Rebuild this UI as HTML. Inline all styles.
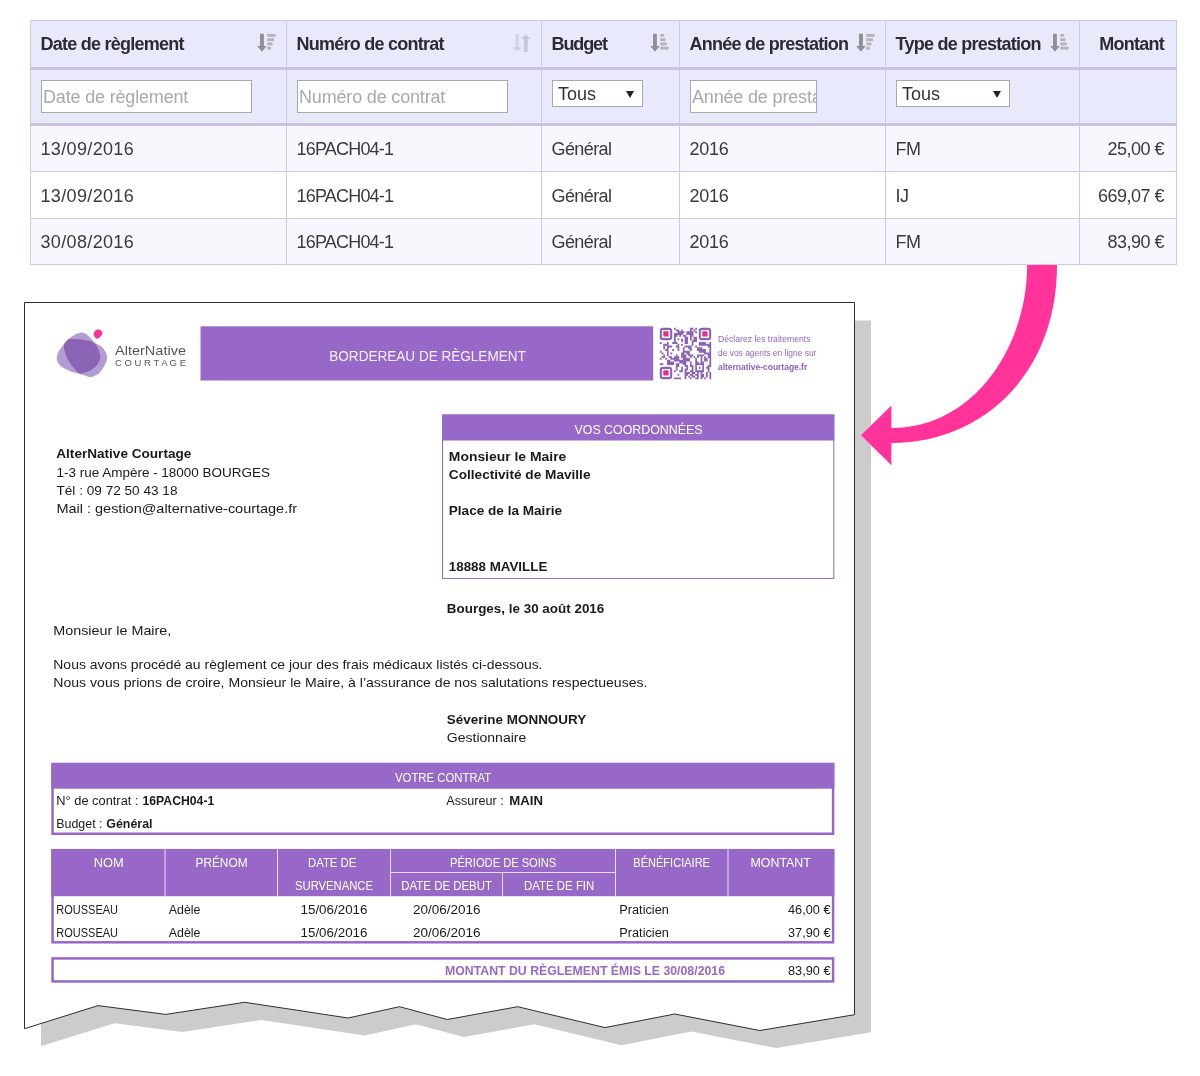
<!DOCTYPE html>
<html lang="fr"><head><meta charset="utf-8"><title>Bordereau de règlement</title>
<style>
*{box-sizing:border-box}
html,body{margin:0;padding:0;background:#fff}
body{width:1200px;height:1076px;position:relative;overflow:hidden;font-family:"Liberation Sans",sans-serif;color:#333}
table.grid{will-change:transform;position:absolute;left:30px;top:20px;width:1146px;border-collapse:collapse;table-layout:fixed;font-size:18px}
table.grid th,table.grid td{border:1px solid #cdcae6;padding:0 0 0 9.5px;text-align:left;vertical-align:middle;white-space:nowrap;overflow:hidden}
table.grid thead th{background:#e8eafc;height:48px;border-bottom:3px solid #c8c3e1;font-weight:700;font-size:18px;letter-spacing:-0.75px;color:#2b2b33;position:relative;padding-top:1px}
table.grid tr.filters td{background:#e8eafc;height:56px;border-bottom:3px solid #c8c3e1;vertical-align:top;padding-top:10px;padding-left:10px}
table.grid tbody td{height:47px;color:#3a3a3a;padding-top:2px}
table.grid tbody tr.last td{height:46px}
table.grid tbody tr.odd td{background:#f8f7fd}
table.grid tbody tr.even td{background:#fff}
table.grid .num{text-align:right;padding:2px 12px 0 0}
table.grid th.num{padding:1px 12px 0 0}
.sort{position:absolute;top:12px;width:20px;height:20px}
input.f{display:block;height:33px;border:1px solid #a9a9a9;background:#fff;font:18px "Liberation Sans",sans-serif;letter-spacing:-0.17px;padding:2px 0 0 1px;margin:0;color:#333;outline:none;border-radius:0}
input.f::placeholder{color:#a9a9a9;opacity:1}
.sel{display:block;position:relative;height:27px;border:1px solid #a9a9a9;background:#fff;font-size:18px;line-height:26px;padding-left:5px;color:#333}
.sel i{position:absolute;right:8px;top:10px;width:0;height:0;border-left:4px solid transparent;border-right:4px solid transparent;border-top:7px solid #222}
svg.doc{position:absolute;left:0;top:0;will-change:transform}
</style></head>
<body>
<svg class="doc" width="1200" height="1076" viewBox="0 0 1200 1076" font-family="Liberation Sans, sans-serif"><polygon points="41.0,320.5 41.0,1046.3 114.5,1023.2 182.3,1032.0 261.2,1019.9 364.6,1035.6 415.9,1024.3 463.8,1037.1 534.2,1024.3 621.5,1045.2 691.2,1031.6 776.3,1048.1 871.0,1032.3 871.0,320.5" fill="#cccccc"/>
<polygon points="24.5,302.5 24.5,1028.7 98.0,1005.6 165.8,1014.4 244.7,1002.3 348.1,1018.0 399.4,1006.7 447.3,1019.5 517.7,1006.7 605.0,1027.6 674.7,1014.0 759.8,1030.5 854.5,1014.7 854.5,302.5" fill="#ffffff" stroke="#2e2e2e" stroke-width="1"/>
<path d="M1027.2 265 L1057 265 C1057 375 981.400 443 891.400 443 L891.400 465.200 L861 435.200 L891.400 405.400 L891.400 428.100 C975.400 428.100 1027.200 345 1027.200 265 Z" fill="#ff3399"/>
<clipPath id="lgA"><path d="M78.4 333.2C79.6 332.8 80.8 332.3 82.1 332.4C83.3 332.5 84.4 333.0 85.7 333.8C86.9 334.5 88.1 335.7 89.6 337.1C91.1 338.5 92.5 340.7 94.6 342.4C96.7 344.1 100.4 345.3 102.4 347.4C104.4 349.5 106.3 352.6 106.9 355.2C107.4 357.8 106.9 360.2 105.7 363.0C104.6 365.8 102.0 369.8 100.2 371.9C98.3 374.1 96.3 375.0 94.6 375.8C92.9 376.7 91.6 377.0 90.1 377.0C88.6 377.0 87.7 376.6 85.7 375.8C83.6 375.1 80.8 375.1 77.9 372.5C75.0 369.9 70.7 364.4 68.4 360.2C66.1 356.1 64.2 350.7 63.9 347.4C63.7 344.2 64.9 342.9 66.7 340.7C68.6 338.6 73.1 335.8 75.1 334.6C77.0 333.3 77.3 333.6 78.4 333.2Z"/></clipPath>
<path d="M78.4 333.2C79.6 332.8 80.8 332.3 82.1 332.4C83.3 332.5 84.4 333.0 85.7 333.8C86.9 334.5 88.1 335.7 89.6 337.1C91.1 338.5 92.5 340.7 94.6 342.4C96.7 344.1 100.4 345.3 102.4 347.4C104.4 349.5 106.3 352.6 106.9 355.2C107.4 357.8 106.9 360.2 105.7 363.0C104.6 365.8 102.0 369.8 100.2 371.9C98.3 374.1 96.3 375.0 94.6 375.8C92.9 376.7 91.6 377.0 90.1 377.0C88.6 377.0 87.7 376.6 85.7 375.8C83.6 375.1 80.8 375.1 77.9 372.5C75.0 369.9 70.7 364.4 68.4 360.2C66.1 356.1 64.2 350.7 63.9 347.4C63.7 344.2 64.9 342.9 66.7 340.7C68.6 338.6 73.1 335.8 75.1 334.6C77.0 333.3 77.3 333.6 78.4 333.2Z" fill="#b39bd3"/><path d="M61.1 348.0C62.7 345.7 64.9 342.2 66.7 340.7C68.6 339.2 69.1 339.1 72.3 339.1C75.5 339.0 82.0 339.4 85.7 340.2C89.4 340.9 92.3 341.4 94.6 343.5C96.9 345.6 98.8 350.2 99.6 353.0C100.4 355.8 100.6 357.6 99.6 360.2C98.6 362.8 96.2 366.5 93.5 368.6C90.8 370.7 86.7 372.4 83.4 373.1C80.2 373.7 77.2 373.3 74.0 372.5C70.7 371.7 66.4 369.3 63.9 368.0C61.5 366.7 60.7 366.1 59.5 364.7C58.3 363.3 57.1 361.4 56.8 359.7C56.5 357.9 56.8 356.1 57.5 354.1C58.2 352.1 59.6 350.2 61.1 348.0Z" fill="#b39bd3"/><path d="M61.1 348.0C62.7 345.7 64.9 342.2 66.7 340.7C68.6 339.2 69.1 339.1 72.3 339.1C75.5 339.0 82.0 339.4 85.7 340.2C89.4 340.9 92.3 341.4 94.6 343.5C96.9 345.6 98.8 350.2 99.6 353.0C100.4 355.8 100.6 357.6 99.6 360.2C98.6 362.8 96.2 366.5 93.5 368.6C90.8 370.7 86.7 372.4 83.4 373.1C80.2 373.7 77.2 373.3 74.0 372.5C70.7 371.7 66.4 369.3 63.9 368.0C61.5 366.7 60.7 366.1 59.5 364.7C58.3 363.3 57.1 361.4 56.8 359.7C56.5 357.9 56.8 356.1 57.5 354.1C58.2 352.1 59.6 350.2 61.1 348.0Z" fill="#8c64b5" clip-path="url(#lgA)"/>
<path d="M94.0 332.4C94.6 331.3 96.2 329.9 97.4 329.6C98.6 329.3 100.5 329.9 101.3 330.7C102.1 331.5 102.8 333.2 102.1 334.6C101.5 335.9 98.7 338.6 97.4 338.8C96.0 339.0 94.6 336.8 94.0 335.7C93.5 334.6 93.5 333.4 94.0 332.4Z" fill="#fb3399"/>
<text x="115" y="354.5" font-size="13.3" fill="#565656" textLength="71.0" lengthAdjust="spacingAndGlyphs">AlterNative</text>
<text x="115" y="365.6" font-size="8.2" fill="#565656" textLength="71.0" lengthAdjust="spacingAndGlyphs">C O U R T A G E</text>
<rect x="200.5" y="326.3" width="452.7" height="54.2" fill="#9768c8"/>
<text x="329.3" y="360.7" font-size="15" fill="#f7f1fd" textLength="196.5" lengthAdjust="spacingAndGlyphs">BORDEREAU DE RÈGLEMENT</text>
<path d="M674.0 327.8h1.8v1.92h-1.8zM689.9 327.8h3.5v1.92h-3.5zM695.2 327.8h1.8v1.92h-1.8zM675.8 329.6h3.5v1.92h-3.5zM681.1 329.6h1.8v1.92h-1.8zM689.9 329.6h1.8v1.92h-1.8zM693.5 329.6h1.8v1.92h-1.8zM677.5 331.3h7.1v1.92h-7.1zM686.4 331.3h7.1v1.92h-7.1zM695.2 331.3h1.8v1.92h-1.8zM674.0 333.1h8.9v1.92h-8.9zM686.4 333.1h7.1v1.92h-7.1zM674.0 334.9h3.5v1.92h-3.5zM679.3 334.9h1.8v1.92h-1.8zM682.8 334.9h3.5v1.92h-3.5zM689.9 334.9h3.5v1.92h-3.5zM674.0 336.7h1.8v1.92h-1.8zM684.6 336.7h3.5v1.92h-3.5zM689.9 336.7h1.8v1.92h-1.8zM693.5 336.7h3.5v1.92h-3.5zM674.0 338.4h1.8v1.92h-1.8zM677.5 338.4h1.8v1.92h-1.8zM681.1 338.4h1.8v1.92h-1.8zM684.6 338.4h3.5v1.92h-3.5zM689.9 338.4h1.8v1.92h-1.8zM693.5 338.4h3.5v1.92h-3.5zM674.0 340.2h1.8v1.92h-1.8zM681.1 340.2h1.8v1.92h-1.8zM684.6 340.2h3.5v1.92h-3.5zM691.7 340.2h5.3v1.92h-5.3zM659.8 342.0h1.8v1.92h-1.8zM666.9 342.0h1.8v1.92h-1.8zM672.2 342.0h5.3v1.92h-5.3zM684.6 342.0h3.5v1.92h-3.5zM691.7 342.0h1.8v1.92h-1.8zM698.8 342.0h7.1v1.92h-7.1zM709.4 342.0h1.8v1.92h-1.8zM663.3 343.8h5.3v1.92h-5.3zM677.5 343.8h1.8v1.92h-1.8zM681.1 343.8h1.8v1.92h-1.8zM691.7 343.8h1.8v1.92h-1.8zM698.8 343.8h12.4v1.92h-12.4zM663.3 345.5h1.8v1.92h-1.8zM666.9 345.5h5.3v1.92h-5.3zM675.8 345.5h3.5v1.92h-3.5zM684.6 345.5h7.1v1.92h-7.1zM695.2 345.5h1.8v1.92h-1.8zM707.7 345.5h3.5v1.92h-3.5zM663.3 347.3h1.8v1.92h-1.8zM666.9 347.3h1.8v1.92h-1.8zM677.5 347.3h1.8v1.92h-1.8zM682.8 347.3h1.8v1.92h-1.8zM688.2 347.3h3.5v1.92h-3.5zM697.0 347.3h5.3v1.92h-5.3zM709.4 347.3h1.8v1.92h-1.8zM665.1 349.1h3.5v1.92h-3.5zM672.2 349.1h1.8v1.92h-1.8zM677.5 349.1h1.8v1.92h-1.8zM682.8 349.1h1.8v1.92h-1.8zM689.9 349.1h1.8v1.92h-1.8zM697.0 349.1h8.9v1.92h-8.9zM709.4 349.1h1.8v1.92h-1.8zM659.8 350.8h1.8v1.92h-1.8zM666.9 350.8h1.8v1.92h-1.8zM682.8 350.8h7.1v1.92h-7.1zM698.8 350.8h7.1v1.92h-7.1zM709.4 350.8h1.8v1.92h-1.8zM661.6 352.6h1.8v1.92h-1.8zM666.9 352.6h1.8v1.92h-1.8zM670.4 352.6h1.8v1.92h-1.8zM681.1 352.6h3.5v1.92h-3.5zM686.4 352.6h3.5v1.92h-3.5zM704.1 352.6h7.1v1.92h-7.1zM663.3 354.4h1.8v1.92h-1.8zM666.9 354.4h1.8v1.92h-1.8zM675.8 354.4h1.8v1.92h-1.8zM681.1 354.4h5.3v1.92h-5.3zM688.2 354.4h5.3v1.92h-5.3zM697.0 354.4h7.1v1.92h-7.1zM707.7 354.4h3.5v1.92h-3.5zM661.6 356.2h3.5v1.92h-3.5zM668.7 356.2h3.5v1.92h-3.5zM674.0 356.2h5.3v1.92h-5.3zM681.1 356.2h5.3v1.92h-5.3zM689.9 356.2h1.8v1.92h-1.8zM693.5 356.2h1.8v1.92h-1.8zM697.0 356.2h1.8v1.92h-1.8zM700.6 356.2h1.8v1.92h-1.8zM704.1 356.2h1.8v1.92h-1.8zM707.7 356.2h3.5v1.92h-3.5zM659.8 357.9h1.8v1.92h-1.8zM665.1 357.9h1.8v1.92h-1.8zM670.4 357.9h8.9v1.92h-8.9zM682.8 357.9h7.1v1.92h-7.1zM695.2 357.9h1.8v1.92h-1.8zM700.6 357.9h1.8v1.92h-1.8zM704.1 357.9h3.5v1.92h-3.5zM709.4 357.9h1.8v1.92h-1.8zM666.9 359.7h3.5v1.92h-3.5zM674.0 359.7h16.0v1.92h-16.0zM695.2 359.7h1.8v1.92h-1.8zM700.6 359.7h1.8v1.92h-1.8zM704.1 359.7h3.5v1.92h-3.5zM709.4 359.7h1.8v1.92h-1.8zM666.9 361.5h7.1v1.92h-7.1zM679.3 361.5h7.1v1.92h-7.1zM689.9 361.5h1.8v1.92h-1.8zM695.2 361.5h3.5v1.92h-3.5zM700.6 361.5h3.5v1.92h-3.5zM709.4 361.5h1.8v1.92h-1.8zM659.8 363.2h3.5v1.92h-3.5zM666.9 363.2h7.1v1.92h-7.1zM675.8 363.2h3.5v1.92h-3.5zM682.8 363.2h3.5v1.92h-3.5zM689.9 363.2h1.8v1.92h-1.8zM695.2 363.2h8.9v1.92h-8.9zM709.4 363.2h1.8v1.92h-1.8zM675.8 365.0h3.5v1.92h-3.5zM684.6 365.0h3.5v1.92h-3.5zM689.9 365.0h3.5v1.92h-3.5zM695.2 365.0h1.8v1.92h-1.8zM702.3 365.0h1.8v1.92h-1.8zM707.7 365.0h3.5v1.92h-3.5zM675.8 366.8h1.8v1.92h-1.8zM681.1 366.8h1.8v1.92h-1.8zM686.4 366.8h1.8v1.92h-1.8zM691.7 366.8h1.8v1.92h-1.8zM695.2 366.8h1.8v1.92h-1.8zM698.8 366.8h1.8v1.92h-1.8zM702.3 366.8h1.8v1.92h-1.8zM705.9 366.8h3.5v1.92h-3.5zM675.8 368.6h1.8v1.92h-1.8zM681.1 368.6h1.8v1.92h-1.8zM684.6 368.6h3.5v1.92h-3.5zM691.7 368.6h1.8v1.92h-1.8zM695.2 368.6h1.8v1.92h-1.8zM702.3 368.6h1.8v1.92h-1.8zM707.7 368.6h1.8v1.92h-1.8zM674.0 370.3h1.8v1.92h-1.8zM679.3 370.3h3.5v1.92h-3.5zM684.6 370.3h1.8v1.92h-1.8zM689.9 370.3h3.5v1.92h-3.5zM695.2 370.3h8.9v1.92h-8.9zM707.7 370.3h1.8v1.92h-1.8zM684.6 372.1h5.3v1.92h-5.3zM691.7 372.1h3.5v1.92h-3.5zM697.0 372.1h1.8v1.92h-1.8zM700.6 372.1h1.8v1.92h-1.8zM705.9 372.1h1.8v1.92h-1.8zM709.4 372.1h1.8v1.92h-1.8zM677.5 373.9h1.8v1.92h-1.8zM684.6 373.9h3.5v1.92h-3.5zM689.9 373.9h3.5v1.92h-3.5zM695.2 373.9h3.5v1.92h-3.5zM700.6 373.9h3.5v1.92h-3.5zM705.9 373.9h1.8v1.92h-1.8zM709.4 373.9h1.8v1.92h-1.8zM684.6 375.7h1.8v1.92h-1.8zM688.2 375.7h1.8v1.92h-1.8zM691.7 375.7h3.5v1.92h-3.5zM697.0 375.7h1.8v1.92h-1.8zM700.6 375.7h3.5v1.92h-3.5zM705.9 375.7h1.8v1.92h-1.8zM709.4 375.7h1.8v1.92h-1.8zM674.0 377.4h7.1v1.92h-7.1zM684.6 377.4h1.8v1.92h-1.8zM689.9 377.4h1.8v1.92h-1.8zM695.2 377.4h3.5v1.92h-3.5zM700.6 377.4h1.8v1.92h-1.8zM704.1 377.4h1.8v1.92h-1.8zM709.4 377.4h1.8v1.92h-1.8z" fill="#8c64b6"/>
<rect x="660.85" y="328.85" width="10.31" height="10.31" rx="2" fill="#fff" stroke="#8c64b6" stroke-width="2.1"/>
<rect x="663.3" y="331.3" width="5.3" height="5.3" rx="0.5" fill="#ee2a8f"/>
<rect x="699.84" y="328.85" width="10.31" height="10.31" rx="2" fill="#fff" stroke="#8c64b6" stroke-width="2.1"/>
<rect x="702.3" y="331.3" width="5.3" height="5.3" rx="0.5" fill="#ee2a8f"/>
<rect x="660.85" y="367.84" width="10.31" height="10.31" rx="2" fill="#fff" stroke="#8c64b6" stroke-width="2.1"/>
<rect x="663.3" y="370.3" width="5.3" height="5.3" rx="0.5" fill="#ee2a8f"/>
<text x="718" y="342.1" font-size="8.6" fill="#9563c4" textLength="92.5" lengthAdjust="spacingAndGlyphs">Déclarez les traitements</text>
<text x="718" y="355.8" font-size="8.6" fill="#9563c4" textLength="98.4" lengthAdjust="spacingAndGlyphs">de vos agents en ligne sur</text>
<text x="718" y="370.1" font-size="8.6" font-weight="700" fill="#8f5fc0" textLength="89.2" lengthAdjust="spacingAndGlyphs">alternative-courtage.fr</text>
<text x="56.3" y="458.3" font-size="13" font-weight="700" fill="#1a1a1a" textLength="135.0" lengthAdjust="spacingAndGlyphs">AlterNative Courtage</text>
<text x="56.5" y="477" font-size="13" fill="#1a1a1a" textLength="213.5" lengthAdjust="spacingAndGlyphs">1-3 rue Ampère - 18000 BOURGES</text>
<text x="56.5" y="495" font-size="13" fill="#1a1a1a" textLength="121.0" lengthAdjust="spacingAndGlyphs">Tél : 09 72 50 43 18</text>
<text x="56.5" y="513.3" font-size="13" fill="#1a1a1a" textLength="240.5" lengthAdjust="spacingAndGlyphs">Mail : gestion@alternative-courtage.fr</text>
<rect x="442.5" y="415" width="391.3" height="163.4" fill="#fff" stroke="#9069bd" stroke-width="1"/>
<rect x="442" y="414.5" width="392.3" height="26" fill="#9768c8"/>
<text x="574.5" y="434.3" font-size="13" fill="#fff" textLength="128.0" lengthAdjust="spacingAndGlyphs">VOS COORDONNÉES</text>
<text x="448.8" y="460.5" font-size="13" font-weight="700" fill="#1a1a1a" textLength="117.5" lengthAdjust="spacingAndGlyphs">Monsieur le Maire</text>
<text x="448.8" y="479.3" font-size="13" font-weight="700" fill="#1a1a1a" textLength="141.7" lengthAdjust="spacingAndGlyphs">Collectivité de Maville</text>
<text x="448.8" y="515" font-size="13" font-weight="700" fill="#1a1a1a" textLength="113.2" lengthAdjust="spacingAndGlyphs">Place de la Mairie</text>
<text x="448.8" y="570.5" font-size="13" font-weight="700" fill="#1a1a1a" textLength="98.5" lengthAdjust="spacingAndGlyphs">18888 MAVILLE</text>
<text x="446.8" y="613" font-size="13" font-weight="700" fill="#1a1a1a" textLength="157.5" lengthAdjust="spacingAndGlyphs">Bourges, le 30 août 2016</text>
<text x="53.3" y="635" font-size="13" fill="#1a1a1a" textLength="118.0" lengthAdjust="spacingAndGlyphs">Monsieur le Maire,</text>
<text x="53.3" y="668.8" font-size="13" fill="#1a1a1a" textLength="489.2" lengthAdjust="spacingAndGlyphs">Nous avons procédé au règlement ce jour des frais médicaux listés ci-dessous.</text>
<text x="53.3" y="687" font-size="13" fill="#1a1a1a" textLength="594.2" lengthAdjust="spacingAndGlyphs">Nous vous prions de croire, Monsieur le Maire, à l’assurance de nos salutations respectueuses.</text>
<text x="446.8" y="723.8" font-size="13" font-weight="700" fill="#1a1a1a" textLength="139.5" lengthAdjust="spacingAndGlyphs">Séverine MONNOURY</text>
<text x="446.8" y="742" font-size="13" fill="#1a1a1a" textLength="79.5" lengthAdjust="spacingAndGlyphs">Gestionnaire</text>
<rect x="52.55" y="764" width="780.55" height="69.75" fill="#fff" stroke="#9768c8" stroke-width="2.5"/>
<rect x="51.3" y="763.2" width="783.05" height="25.5" fill="#9768c8"/>
<text x="395" y="781.8" font-size="12.5" fill="#fff" textLength="96.3" lengthAdjust="spacingAndGlyphs">VOTRE CONTRAT</text>
<text x="56.3" y="804.5" font-size="12" fill="#1a1a1a" textLength="82.2" lengthAdjust="spacingAndGlyphs">N° de contrat :</text>
<text x="142.5" y="804.5" font-size="12" font-weight="700" fill="#1a1a1a" textLength="71.8" lengthAdjust="spacingAndGlyphs">16PACH04-1</text>
<text x="446.3" y="804.5" font-size="12" fill="#1a1a1a" textLength="57.5" lengthAdjust="spacingAndGlyphs">Assureur :</text>
<text x="509.3" y="804.5" font-size="12" font-weight="700" fill="#1a1a1a" textLength="33.7" lengthAdjust="spacingAndGlyphs">MAIN</text>
<text x="56.3" y="827.5" font-size="12" fill="#1a1a1a" textLength="46.2" lengthAdjust="spacingAndGlyphs">Budget :</text>
<text x="106.3" y="827.5" font-size="12" font-weight="700" fill="#1a1a1a" textLength="46.2" lengthAdjust="spacingAndGlyphs">Général</text>
<rect x="52.55" y="850.2" width="780.55" height="92.1" fill="#fff" stroke="#9768c8" stroke-width="2.5"/>
<rect x="51.3" y="849.2" width="783.05" height="47" fill="#9768c8"/>
<line x1="165" y1="849.2" x2="165" y2="896.2" stroke="#e6dcf3" stroke-width="1"/>
<line x1="277.5" y1="849.2" x2="277.5" y2="896.2" stroke="#e6dcf3" stroke-width="1"/>
<line x1="390.5" y1="849.2" x2="390.5" y2="896.2" stroke="#e6dcf3" stroke-width="1"/>
<line x1="615.5" y1="849.2" x2="615.5" y2="896.2" stroke="#e6dcf3" stroke-width="1"/>
<line x1="728" y1="849.2" x2="728" y2="896.2" stroke="#e6dcf3" stroke-width="1"/>
<line x1="502.5" y1="872.5" x2="502.5" y2="896.2" stroke="#e6dcf3" stroke-width="1"/>
<line x1="390.5" y1="872.5" x2="615.5" y2="872.5" stroke="#e6dcf3" stroke-width="1"/>
<text x="93.8" y="866.8" font-size="12" fill="#fff" textLength="30.0" lengthAdjust="spacingAndGlyphs">NOM</text>
<text x="195.5" y="866.8" font-size="12" fill="#fff" textLength="52.0" lengthAdjust="spacingAndGlyphs">PRÉNOM</text>
<text x="308" y="866.8" font-size="12" fill="#fff" textLength="48.3" lengthAdjust="spacingAndGlyphs">DATE DE</text>
<text x="295" y="890" font-size="12" fill="#fff" textLength="78.0" lengthAdjust="spacingAndGlyphs">SURVENANCE</text>
<text x="450" y="866.8" font-size="12" fill="#fff" textLength="106.3" lengthAdjust="spacingAndGlyphs">PÉRIODE DE SOINS</text>
<text x="401.3" y="890" font-size="12" fill="#fff" textLength="90.7" lengthAdjust="spacingAndGlyphs">DATE DE DEBUT</text>
<text x="524" y="890" font-size="12" fill="#fff" textLength="70.3" lengthAdjust="spacingAndGlyphs">DATE DE FIN</text>
<text x="633.3" y="866.8" font-size="12" fill="#fff" textLength="76.7" lengthAdjust="spacingAndGlyphs">BÉNÉFICIAIRE</text>
<text x="750.5" y="866.8" font-size="12" fill="#fff" textLength="60.3" lengthAdjust="spacingAndGlyphs">MONTANT</text>
<text x="56.3" y="913.8" font-size="12" fill="#1a1a1a" textLength="61.7" lengthAdjust="spacingAndGlyphs">ROUSSEAU</text>
<text x="168.8" y="913.8" font-size="12" fill="#1a1a1a" textLength="31.7" lengthAdjust="spacingAndGlyphs">Adèle</text>
<text x="300.5" y="913.8" font-size="12" fill="#1a1a1a" textLength="67.0" lengthAdjust="spacingAndGlyphs">15/06/2016</text>
<text x="413" y="913.8" font-size="12" fill="#1a1a1a" textLength="67.5" lengthAdjust="spacingAndGlyphs">20/06/2016</text>
<text x="619.3" y="913.8" font-size="12" fill="#1a1a1a" textLength="49.5" lengthAdjust="spacingAndGlyphs">Praticien</text>
<text x="788" y="913.8" font-size="12" fill="#1a1a1a" textLength="42.5" lengthAdjust="spacingAndGlyphs">46,00 €</text>
<text x="56.3" y="936.8" font-size="12" fill="#1a1a1a" textLength="61.7" lengthAdjust="spacingAndGlyphs">ROUSSEAU</text>
<text x="168.8" y="936.8" font-size="12" fill="#1a1a1a" textLength="31.7" lengthAdjust="spacingAndGlyphs">Adèle</text>
<text x="300.5" y="936.8" font-size="12" fill="#1a1a1a" textLength="67.0" lengthAdjust="spacingAndGlyphs">15/06/2016</text>
<text x="413" y="936.8" font-size="12" fill="#1a1a1a" textLength="67.5" lengthAdjust="spacingAndGlyphs">20/06/2016</text>
<text x="619.3" y="936.8" font-size="12" fill="#1a1a1a" textLength="49.5" lengthAdjust="spacingAndGlyphs">Praticien</text>
<text x="788" y="936.8" font-size="12" fill="#1a1a1a" textLength="42.5" lengthAdjust="spacingAndGlyphs">37,90 €</text>
<rect x="52.55" y="958.45" width="780.55" height="23" fill="#fff" stroke="#9768c8" stroke-width="2.5"/>
<text x="445" y="975" font-size="12" font-weight="700" fill="#9768c8" textLength="280.0" lengthAdjust="spacingAndGlyphs">MONTANT DU RÈGLEMENT ÉMIS LE 30/08/2016</text>
<text x="788" y="975" font-size="12" fill="#1a1a1a" textLength="42.5" lengthAdjust="spacingAndGlyphs">83,90 €</text></svg>
<table class="grid"><colgroup><col style="width:256px"><col style="width:255px"><col style="width:138px"><col style="width:206px"><col style="width:194px"><col style="width:97px"></colgroup><thead><tr><th>Date de règlement<svg class="sort" style="left:226px" viewBox="0 0 21 20"><path d="M3.200 0.300h4v12.900h3L5.200 19.200 0.200 13.200h3z" fill="#8f8f95"/><rect x="10.800" y="0.5" width="8.7" height="3" fill="#b3b3bb"/><rect x="10.800" y="5.0" width="7" height="3" fill="#b3b3bb"/><rect x="10.800" y="9.5" width="5.5" height="3" fill="#b3b3bb"/><rect x="10.800" y="14.0" width="4" height="3" fill="#b3b3bb"/></svg></th><th>Numéro de contrat<svg class="sort" style="left:225px" viewBox="0 0 21 20"><path d="M3.9 0.6h3v13.900h3.700L5.400 19 0.100 14.500h3.800z" fill="#cfd2e1"/><path d="M12.500 19.400v-13.500h-3L14.400 1l4.800 4.900h-2.800v13.500z" fill="#c4c7d7"/></svg></th><th><span style="letter-spacing:-1.1px">Budget</span><svg class="sort" style="left:108px" viewBox="0 0 21 20"><path d="M3.200 0.300h4v12.900h3L5.200 19.200 0.200 13.200h3z" fill="#8f8f95"/><rect x="10.800" y="0.5" width="4" height="3" fill="#b3b3bb"/><rect x="10.800" y="5.0" width="5.5" height="3" fill="#b3b3bb"/><rect x="10.800" y="9.5" width="7" height="3" fill="#b3b3bb"/><rect x="10.800" y="14.0" width="8.7" height="3" fill="#b3b3bb"/></svg></th><th>Année de prestation<svg class="sort" style="left:176px" viewBox="0 0 21 20"><path d="M3.200 0.300h4v12.900h3L5.200 19.200 0.200 13.200h3z" fill="#8f8f95"/><rect x="10.800" y="0.5" width="8.7" height="3" fill="#b3b3bb"/><rect x="10.800" y="5.0" width="7" height="3" fill="#b3b3bb"/><rect x="10.800" y="9.5" width="5.5" height="3" fill="#b3b3bb"/><rect x="10.800" y="14.0" width="4" height="3" fill="#b3b3bb"/></svg></th><th>Type de prestation<svg class="sort" style="left:164px" viewBox="0 0 21 20"><path d="M3.200 0.300h4v12.900h3L5.200 19.200 0.200 13.200h3z" fill="#8f8f95"/><rect x="10.800" y="0.5" width="4" height="3" fill="#b3b3bb"/><rect x="10.800" y="5.0" width="5.5" height="3" fill="#b3b3bb"/><rect x="10.800" y="9.5" width="7" height="3" fill="#b3b3bb"/><rect x="10.800" y="14.0" width="8.7" height="3" fill="#b3b3bb"/></svg></th><th class="num">Montant</th></tr></thead><tbody><tr class="filters"><td><input class="f" style="width:211px" placeholder="Date de règlement"></td><td><input class="f" style="width:211px" placeholder="Numéro de contrat"></td><td><span class="sel" style="width:91px">Tous<i></i></span></td><td><input class="f" style="width:127px" placeholder="Année de prestation"></td><td><span class="sel" style="width:114px">Tous<i></i></span></td><td></td></tr><tr class="odd"><td style="letter-spacing:0.35px">13/09/2016</td><td style="letter-spacing:-0.8px">16PACH04-1</td><td style="letter-spacing:-0.6px">Général</td><td style="letter-spacing:-0.25px">2016</td><td style="letter-spacing:-0.5px">FM</td><td class="num" style="letter-spacing:-0.5px">25,00 €</td></tr><tr class="even"><td style="letter-spacing:0.35px">13/09/2016</td><td style="letter-spacing:-0.8px">16PACH04-1</td><td style="letter-spacing:-0.6px">Général</td><td style="letter-spacing:-0.25px">2016</td><td style="letter-spacing:-0.5px">IJ</td><td class="num" style="letter-spacing:-0.5px">669,07 €</td></tr><tr class="odd last"><td style="letter-spacing:0.35px">30/08/2016</td><td style="letter-spacing:-0.8px">16PACH04-1</td><td style="letter-spacing:-0.6px">Général</td><td style="letter-spacing:-0.25px">2016</td><td style="letter-spacing:-0.5px">FM</td><td class="num" style="letter-spacing:-0.5px">83,90 €</td></tr></tbody></table>
</body></html>
